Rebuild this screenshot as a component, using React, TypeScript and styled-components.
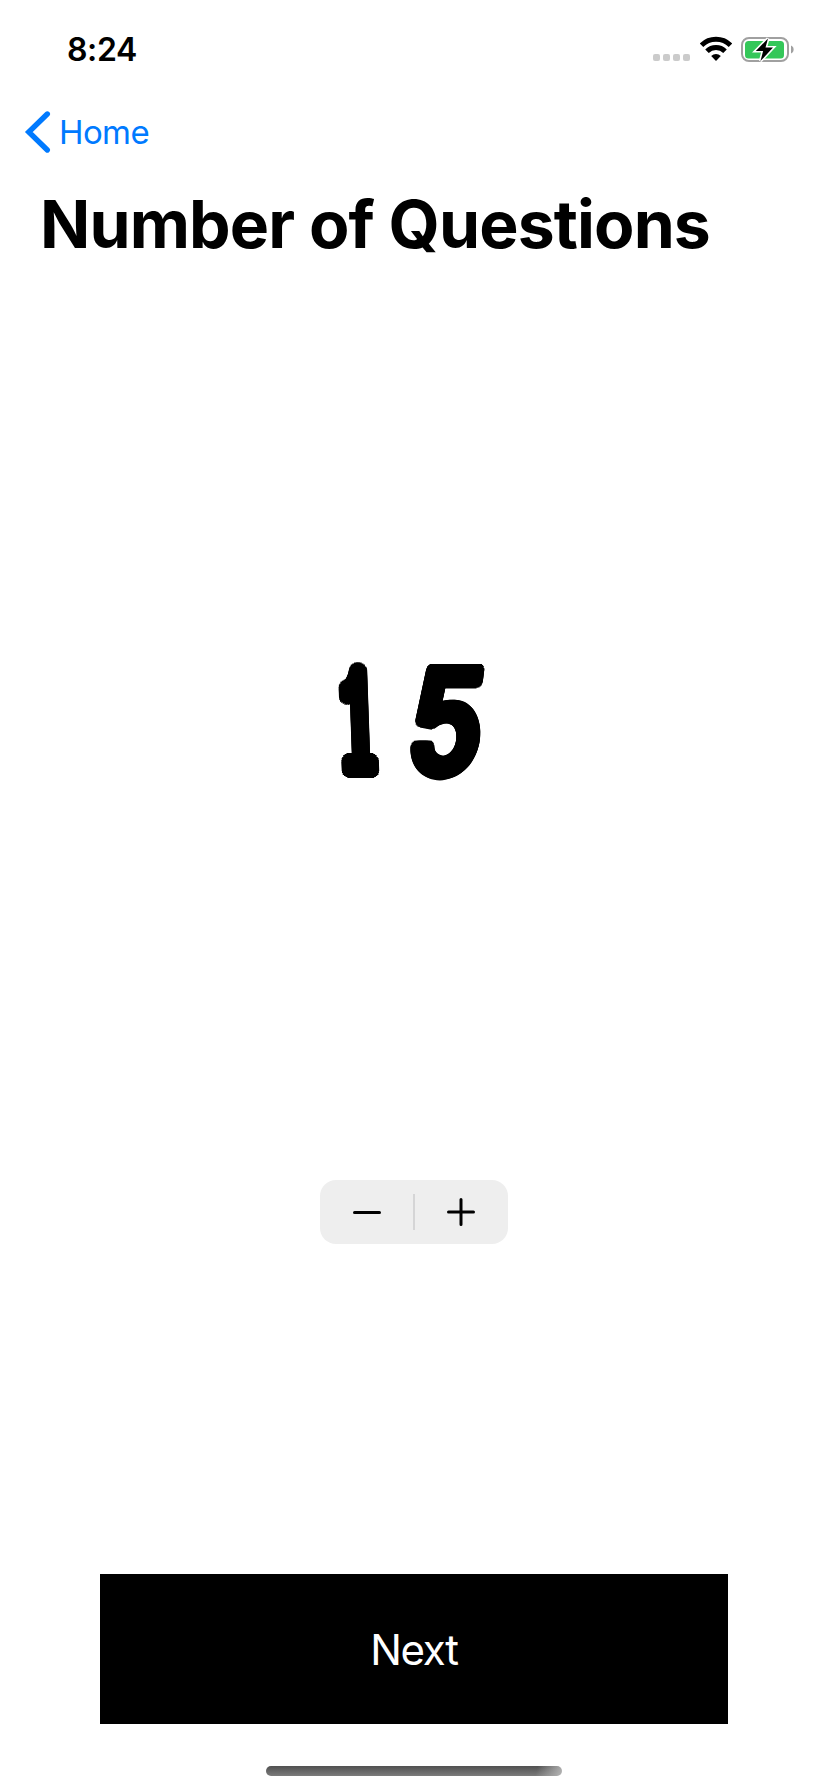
import React, { useState } from "react";
import styled, { createGlobalStyle } from "styled-components";

const GlobalStyle = createGlobalStyle`
  * { box-sizing: border-box; }
  body { margin: 0; background: #fff; }
  button { border: 0; padding: 0; background: none; font: inherit; color: inherit; }
`;

const Screen = styled.main`
  display: flex;
  flex-direction: column;
  align-items: center;
  width: 828px;
  height: 1792px;
  overflow: hidden;
  background: #fff;
  color: #000;
  font-family: Inter, "Liberation Sans", sans-serif;
`;

const StatusBar = styled.header`
  display: flex;
  justify-content: space-between;
  width: 100%;
  height: 88px;
  padding: 30px 33px 0 67px;
`;

const Time = styled.span`
  height: 40px;
  font-size: 32px;
  line-height: 40px;
  font-weight: 600;
  letter-spacing: -0.4px;
`;

const Indicators = styled.div`
  display: flex;
  align-items: flex-start;
  height: 40px;
  padding-top: 6px;
`;

const SignalDots = styled.div`
  display: flex;
  gap: 3px;
  margin: 18px 10px 0 0;
`;

const Dot = styled.i`
  width: 7px;
  height: 7px;
  border-radius: 2px;
  background: #cbcbcb;
`;

const BatterySlot = styled.span`
  display: flex;
  margin-left: 9px;
`;

const NavBar = styled.nav`
  display: flex;
  width: 100%;
  height: 88px;
  padding-left: 24px;
`;

const BackButton = styled.button`
  display: flex;
  align-items: center;
  gap: 7px;
  height: 88px;
  color: #007aff;
  font-size: 33px;
  letter-spacing: -0.6px;
`;

const Title = styled.h1`
  width: 100%;
  height: 96px;
  margin: 0;
  padding-left: 40px;
  font-size: 66px;
  line-height: 96px;
  font-weight: 700;
  letter-spacing: -0.88px;
  white-space: nowrap;
`;

const Count = styled.output`
  display: flex;
  gap: 30px;
  height: 200px;
  margin: 348px 4px 0 0;
`;

/* Even outline that rounds the corners of a digit squeezed by scaleX. */
const roundOutline = (radius: number, scaleX: number) =>
  Array.from({ length: 24 }, (_, i) => {
    const a = (i * Math.PI) / 12;
    return `${((Math.cos(a) * radius) / scaleX).toFixed(2)}px ${(Math.sin(a) * radius).toFixed(2)}px 0 #000`;
  }).join(",");

const Digit = styled.span<{ $narrow: boolean }>`
  display: flex;
  justify-content: center;
  width: ${(p) => (p.$narrow ? 40 : 78)}px;
  padding-top: ${(p) => (p.$narrow ? 10 : 1)}px;
  font-family: ${(p) => (p.$narrow ? '"Liberation Mono", monospace' : "Inter, sans-serif")};
  font-size: ${(p) => (p.$narrow ? 154 : 143)}px;
  font-weight: ${(p) => (p.$narrow ? 400 : 500)};
  line-height: 200px;
  text-shadow: ${(p) => (p.$narrow ? roundOutline(7, 0.32) : roundOutline(5.5, 0.82))};
  transform: ${(p) => (p.$narrow ? "skewX(2deg) scaleX(0.32)" : "skewX(-7deg) scaleX(0.82)")};
`;

const Stepper = styled.div`
  display: flex;
  align-items: center;
  gap: 32px;
  width: 188px;
  height: 64px;
  margin-top: 360px;
  padding-left: 33px;
  border-radius: 16px;
  background: #eee;
`;

const StepButton = styled.button`
  display: flex;
  align-items: center;
  width: 28px;
  height: 64px;
`;

const Divider = styled.span`
  width: 2px;
  height: 36px;
  background: #d5d5d6;
`;

const NextButton = styled.button`
  width: 628px;
  height: 150px;
  margin-top: 330px;
  padding-top: 1px;
  background: #000;
  color: #fff;
  font-size: 42px;
  line-height: 149px;
  letter-spacing: -1.3px;
`;

const HomeIndicator = styled.div`
  width: 296px;
  height: 10px;
  margin-top: 42px;
  border-radius: 5px;
  background: linear-gradient(105deg, transparent 91%, #b4b4b4 100%),
    linear-gradient(#505050, #7b7b7b);
`;

const WifiIcon = () => (
  <svg width="32" height="26" viewBox="0 0 32 26">
    <g fill="none" stroke="#000" strokeWidth="5">
      <path d="M1.5 9.2a20.5 20.5 0 0 1 29 0" />
      <path d="M7 15.2a12.7 12.7 0 0 1 18 0" />
    </g>
    <path d="M11.2 19.9a7 7 0 0 1 9.6 0L16 25Z" />
  </svg>
);

const BatteryIcon = () => (
  <svg width="54" height="28" viewBox="0 0 54 28">
    <rect x="1" y="2" width="46" height="23" rx="7" fill="none" stroke="#a0a0a0" strokeWidth="2" />
    <rect x="4" y="5" width="39" height="17.5" rx="3.5" fill="#34c759" />
    <path d="M50 9.5c3.5 1.3 3.5 6.7 0 8Z" fill="#a0a0a0" />
    <path
      d="M27 2.5 14.8 15h7.3l-2.6 10L32 11.5h-7.5Z"
      fill="#000"
      stroke="#fff"
      strokeWidth="3.2"
      paintOrder="stroke"
    />
  </svg>
);

const Chevron = () => (
  <svg width="28" height="46" viewBox="0 0 28 46">
    <path d="M23.3 5 4.8 23l18.5 18" fill="none" stroke="#007aff" strokeWidth="5.4" strokeLinecap="round" />
  </svg>
);

const Sign = ({ plus = false }: { plus?: boolean }) => (
  <svg width="28" height="28" viewBox="0 0 28 28" stroke="#000" strokeWidth="3" strokeLinecap="round">
    <path d={plus ? "M1.5 14h25M14 1.5v25" : "M1.5 14.5h25"} />
  </svg>
);

export default function App() {
  const [count, setCount] = useState(15);
  return (
    <>
      <GlobalStyle />
      <Screen>
        <StatusBar>
          <Time>8:24</Time>
          <Indicators>
            <SignalDots>
              <Dot />
              <Dot />
              <Dot />
              <Dot />
            </SignalDots>
            <WifiIcon />
            <BatterySlot>
              <BatteryIcon />
            </BatterySlot>
          </Indicators>
        </StatusBar>
        <NavBar>
          <BackButton>
            <Chevron />
            Home
          </BackButton>
        </NavBar>
        <Title>Number of Questions</Title>
        <Count>
          {String(count).split("").map((digit, i) => (
            <Digit key={i} $narrow={digit === "1"}>{digit}</Digit>
          ))}
        </Count>
        <Stepper>
          <StepButton aria-label="Decrease" onClick={() => setCount(Math.max(1, count - 1))}>
            <Sign />
          </StepButton>
          <Divider />
          <StepButton aria-label="Increase" onClick={() => setCount(count + 1)}>
            <Sign plus />
          </StepButton>
        </Stepper>
        <NextButton>Next</NextButton>
        <HomeIndicator />
      </Screen>
    </>
  );
}
